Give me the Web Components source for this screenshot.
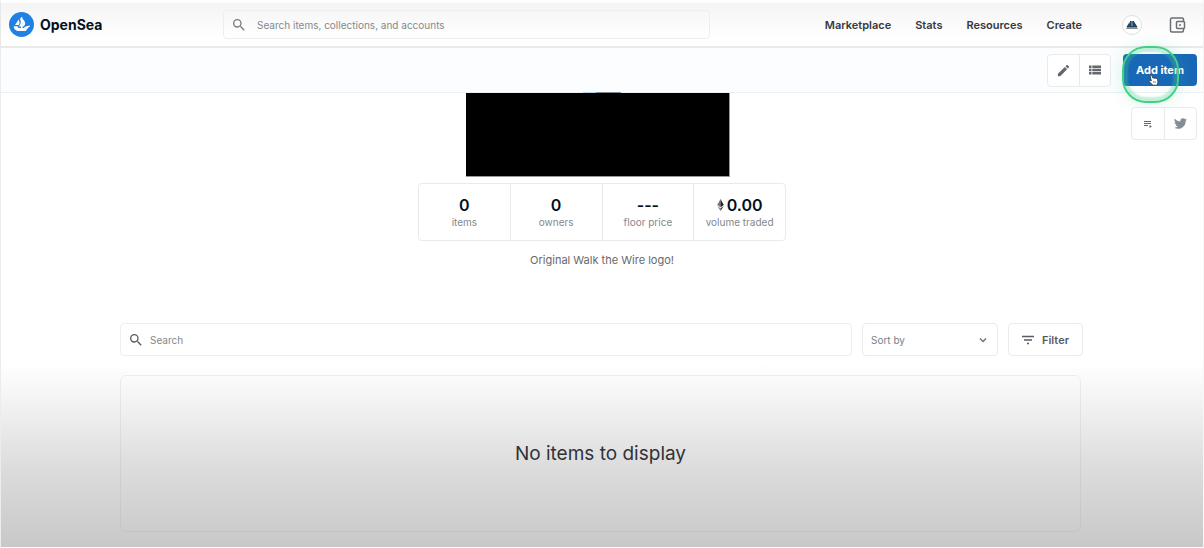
<!DOCTYPE html>
<html lang="en">
<head>
<meta charset="utf-8">
<title>OpenSea</title>
<style>
html { background: #fff; }
body { margin: 0; color: #353840; font: 11px/16px Inter, "Liberation Sans", sans-serif; }
</style>
</head>
<body>
<collection-page></collection-page>
<script>
function define(name, css, html) {
  customElements.define(name, class extends HTMLElement {
    constructor() {
      super();
      this.attachShadow({ mode: "open" }).innerHTML =
        "<style>*{box-sizing:border-box}svg{display:block}" + css + "</style>" + html;
    }
  });
}

const magnifier = '<svg width="16" height="16" viewBox="0 0 24 24" fill="currentColor" aria-hidden="true"><path d="M15.5 14h-.79l-.28-.27A6.47 6.47 0 0 0 16 9.5 6.5 6.5 0 1 0 9.5 16c1.61 0 3.09-.59 4.23-1.57l.27.28v.79l5 4.99L20.49 19zm-6 0a4.5 4.5 0 1 1 0-9 4.5 4.5 0 0 1 0 9"/></svg>';

customElements.define("search-box", class extends HTMLElement {
  constructor() {
    super();
    const label = this.getAttribute("label");
    this.attachShadow({ mode: "open" }).innerHTML = `
      <style>
        :host { display: block; }
        label { box-sizing: border-box; display: flex; align-items: center; gap: var(--box-gap, 6px); height: 100%; padding: 0 8px 0 7px; border: 1px solid #eceeef; border-radius: 4px; color: var(--box-icon, #55595d); }
        svg { display: block; flex: none; }
        input { flex: 1; min-width: 0; padding: 0; border: 0; outline: 0; background: none; font: 10px/16px Inter, "Liberation Sans", sans-serif; color: #353840; }
        input::placeholder { color: #84888c; opacity: 1; }
      </style>
      <label>${magnifier}<input type="text" aria-label="${label}" placeholder="${label}"></label>`;
  }
});

define("brand-logo", `
  :host { display: block; }
  a { display: flex; align-items: center; gap: 6px; color: #04111d; text-decoration: none; font-size: 14px; line-height: 20px; font-weight: 700; }
`, `
  <a href="#"><svg width="25" height="25" viewBox="0 0 90 90" aria-hidden="true"><circle cx="45" cy="45" r="45" fill="#2081e2"/><path fill="#fff" d="m22.2 46.5.2-.3 11.7-18.3c.2-.3.6-.2.8.1 2 4.400 3.600 9.800 2.900 13.200-.3 1.400-1.200 3.300-2.200 5l-.4.7c-.1.1-.2.2-.4.2H22.600c-.4 0-.6-.3-.4-.6"/><path fill="#fff" d="M74.400 49.800v2.600c0 .2 0 .3-.2.4-1 .4-4.200 1.900-5.500 3.800-3.400 4.700-6 11.500-11.800 11.500H32.600C24 68.100 17 61.100 17 52.400v-.3c0-.3.2-.4.4-.4h13.600c.3 0 .5.3.5.5-.1.9.1 1.800.5 2.600.8 1.600 2.500 2.600 4.200 2.600h6.700v-5.200h-6.600c-.4 0-.6-.4-.4-.7l.8-1.100c.6-.9 1.500-2.300 2.400-3.900.6-1 1.200-2.200 1.700-3.300l.6-1.500c.4-1.300.8-2.700.8-4.900 0-2.500-.5-5.500-1.100-7.800-.6-2.300-1.500-4.400-2.600-6.400-.2-.3 0-.6.3-.5l4.200 1.100v-2.300a2.800 2.800 0 0 1 5.600 0v3.900c2.800 1.900 9.500 8.200 9.500 16.500 0 4.100-2.200 6.800-4.200 9.200l-1.500 1.500c-.4.400-1 .500-1.400.500h-2.400v5.200h3c.9 0 1.700-.3 2.400-.8.700-.5 2.300-2.300 3.500-3.800l16.300-4.800c.300-.1.600.1.600.4z"/></svg>OpenSea</a>
`);

define("site-header", `
  :host { display: block; margin-top: 3px; border-bottom: 2px solid #e7e9ea; background: linear-gradient(#f4f4f4, #fff 80%); box-shadow: 0 1px 3px #0000000d; }
  header { display: flex; align-items: center; height: 43px; padding: 0 17px 0 8px; }
  brand-logo { flex: 0 0 214px; }
  search-box { flex: 1; height: 29px; min-width: 100px; --box-gap: 10px; --box-icon: #777b7f; }
  nav { display: flex; align-items: center; gap: 24px; margin-left: 115px; }
  a { color: #353840; text-decoration: none; font-weight: 600; }
  .avatar { margin-left: 16px; }
  .wallet { margin-left: 2px; }
`, `
  <header>
    <brand-logo></brand-logo>
    <search-box label="Search items, collections, and accounts"></search-box>
    <nav aria-label="Main">
      <a href="#">Marketplace</a><a href="#">Stats</a><a href="#">Resources</a><a href="#">Create</a>
      <a class="avatar" href="#" aria-label="Account"><svg width="20" height="20" viewBox="0 0 20 20"><circle cx="10" cy="10" r="9.500" fill="#fff" stroke="#dcdfe1"/><path d="M4.500 12 7.500 7l1 5zM8 12V6h4v6zM12 6.500l3.500 5.500h-3.500z" fill="#24465c"/><path d="M9 6h1.500l.5 5H9z" fill="#4f83a8"/><path d="M4 14h12l-1-2H5z" fill="#898f95"/></svg></a>
      <a class="wallet" href="#" aria-label="Wallet"><svg width="18" height="18" viewBox="0 0 18 18" fill="none" stroke="#6a6f76" stroke-width="1.500"><path d="M15.500 5V3.500q0-1.500-1.500-1.500H4Q2.500 2 2.500 3.500v11Q2.500 16 4 16h10q1.500 0 1.500-1.500V13"/><rect x="8.500" y="5.500" width="8" height="7" rx="1"/><circle cx="12" cy="9" r="1" fill="#6a6f76" stroke="none"/></svg></a>
    </nav>
  </header>
`);

define("icon-pair", `
  :host { box-sizing: border-box; display: flex; width: 64px; height: 33px; border: 1px solid #e8eaeb; border-radius: 4px; background: #fff; }
  ::slotted(button) { display: flex; flex: 1; align-items: center; justify-content: center; margin: 0; padding: 0; border: 0; background: none; color: #63686f; }
  ::slotted(button:last-child) { border-left: 1px solid #e8eaeb; }
`, `<slot></slot>`);

define("owner-toolbar", `
  :host { display: block; border-bottom: 1px solid #edf0f1; background: #fbfdff; }
  .bar { display: flex; justify-content: flex-end; align-items: center; gap: 12px; height: 44px; padding: 0 6px; }
  .add { position: relative; }
  .add > button { display: block; width: 74px; height: 32px; padding: 0; border: 0; border-radius: 4px; background: #1868b7; color: #fff; font: 700 11px/16px Inter, "Liberation Sans", sans-serif; }
  .ring { position: absolute; left: -1px; top: -8px; width: 57px; height: 57px; border: 2px solid #42cf88; border-radius: 24px; box-shadow: 0 0 16px #42cf8838, inset 0 0 2px 4px #42cf8850; pointer-events: none; }
  .hand { position: absolute; left: 25px; top: 20px; pointer-events: none; }
`, `
  <div class="bar">
    <icon-pair>
      <button aria-label="Edit"><svg width="15" height="15" viewBox="0 0 24 24" fill="currentColor"><path d="M3 17.250V21h3.750L17.800 9.900l-3.700-3.700zM20.700 7c.4-.4.4-1 0-1.400l-2.300-2.300c-.4-.4-1-.4-1.400 0l-1.800 1.800L18.900 8.900z"/></svg></button>
      <button aria-label="List view"><svg width="16" height="16" viewBox="0 0 16 16" fill="currentColor"><path d="M2 3.500h2.500v2.500H2zm3.300 0H14v2.500H5.300zM2 6.800h2.500v2.500H2zm3.300 0H14v2.500H5.300zM2 10h2.500v2.500H2zm3.300 0H14v2.500H5.300z"/></svg></button>
    </icon-pair>
    <div class="add">
      <button>Add item</button>
      <div class="ring"></div>
      <svg class="hand" width="11" height="12" viewBox="0 0 11 12"><path d="M2 1q1-.8 1.700.4L5 4.200q.8-.7 1.400.1.900-.6 1.400.2 1.200-.5 1.600.6l.6 2.900-.8 3.200H5L1.300 7.700Q.6 6.500 1.700 6.200L3.300 7z" fill="#fff" stroke="#26343e" stroke-width=".8"/><path d="m5.500 7 .4 2m1.100-2 .3 2" stroke="#26343e" stroke-width=".5"/></svg>
    </div>
  </div>
`);

define("stat-cell", `
  :host { flex: 1; display: flex; flex-direction: column; align-items: center; padding: 12px 0 9px; }
  :host(:not(:first-child)) { border-left: 1px solid #e8ebec; }
  .value { display: flex; align-items: center; gap: 3px; font-size: 16px; line-height: 18px; font-weight: 600; color: #04111d; }
  .label { font-size: 10px; line-height: 16px; color: #83888d; }
`, `<div class="value"><slot name="value"></slot></div><div class="label"><slot></slot></div>`);

define("collection-summary", `
  :host { display: flex; flex-direction: column; align-items: center; position: relative; }
  .links { position: absolute; right: 6px; top: 14px; }
  .links icon-pair { width: 66px; }
  .cover { position: relative; width: 264px; height: 84px; margin-right: 9px; border: solid #999; border-width: 0 1px 1px 0; background: #000; }
  .peek { position: absolute; left: 117px; top: -1px; width: 38px; height: 1px; background: linear-gradient(90deg, #a9d5f7 35%, #7d8994 35%); }
  .stats { display: flex; width: 368px; height: 58px; margin-top: 6px; border: 1px solid #e8ebec; border-radius: 4px; }
  p { margin: 11px 0 0; line-height: 16px; color: #66696d; }
`, `
  <div class="cover"><div class="peek"></div></div>
  <div class="stats">
    <stat-cell><span slot="value">0</span>items</stat-cell>
    <stat-cell><span slot="value">0</span>owners</stat-cell>
    <stat-cell><span slot="value">---</span>floor price</stat-cell>
    <stat-cell><svg slot="value" width="7" height="12" viewBox="0 0 6 11" aria-hidden="true"><path d="M3 0 0 5.500l3 2z" fill="#777"/><path d="m3 0 3 5.500-3 2z" fill="#222"/><path d="m0 6.500 3 2v2.500z" fill="#888"/><path d="m6 6.500-3 2v2.500z" fill="#333"/></svg><span slot="value">0.00</span>volume traded</stat-cell>
  </div>
  <p>Original Walk the Wire logo!</p>
  <div class="links"><icon-pair>
    <button aria-label="Activity"><svg width="10" height="10" viewBox="0 0 10 10" fill="none" stroke="currentColor"><path d="M1 2.500h7M1 4.500h7M1 6.500h4"/><path d="m6.500 6 2.500 1.500L6.500 9z" fill="currentColor" stroke="none"/></svg></button>
    <button aria-label="Twitter"><svg width="13" height="13" viewBox="0 0 24 24" fill="#858e96"><path d="M23.950 4.570a10 10 0 0 1-2.820.77 4.960 4.960 0 0 0 2.160-2.720c-.95.55-2 .95-3.130 1.180a4.920 4.920 0 0 0-8.380 4.480C7.690 8.090 4.070 6.130 1.640 3.160a4.920 4.920 0 0 0 1.520 6.570 4.900 4.900 0 0 1-2.230-.61v.06a4.920 4.920 0 0 0 3.950 4.830 5 5 0 0 1-2.210.08 4.940 4.940 0 0 0 4.600 3.420A9.870 9.870 0 0 1 0 19.540a13.990 13.990 0 0 0 7.550 2.210c9.050 0 14-7.500 14-13.980l-.02-.63a9.940 9.940 0 0 0 2.420-2.570"/></svg></button>
  </icon-pair></div>
`);

define("filter-row", `
  :host { display: flex; gap: 10px; height: 33px; margin: 55px 120px 0 119px; }
  search-box { flex: 1; }
  .sort { flex: 0 0 136px; display: grid; align-items: center; }
  .sort > * { grid-area: 1 / 1; }
  .sort svg { justify-self: end; margin-right: 10px; pointer-events: none; }
  select, button { height: 33px; border: 1px solid #e9ebec; border-radius: 4px; background: #fff; }
  select { appearance: none; width: 100%; padding: 0 8px; color: #7b8085; font: 10px/16px Inter, "Liberation Sans", sans-serif; }
  button { flex: 0 0 75px; display: flex; align-items: center; justify-content: center; gap: 8px; padding: 0; color: #575c62; font: 600 11px/16px Inter, "Liberation Sans", sans-serif; }
`, `
  <search-box label="Search"></search-box>
  <label class="sort"><select aria-label="Sort by"><option>Sort by</option></select><svg width="10" height="10" viewBox="0 0 10 10" fill="none" stroke="#6d7378" stroke-width="1.400"><path d="m2 3.500 3 3 3-3"/></svg></label>
  <button><svg width="12" height="10" viewBox="0 0 12 10" fill="none" stroke="currentColor" stroke-width="1.400"><path d="M0 1.500h12M2 5h8M5 8.500h2"/></svg>Filter</button>
`);

define("empty-results", `
  :host { display: block; padding: 11px 122px 15px 119px; margin-top: 8px; background: linear-gradient(#fff, #f2f2f2 22%, #dcdcdc 57%, #c8c8c8); }
  .panel { display: flex; align-items: center; justify-content: center; height: 157px; border: 1px solid #7882881f; border-radius: 6px; color: #303239; font-size: 19px; line-height: 24px; }
`, `<div class="panel"><slot></slot></div>`);

define("collection-page", `
  :host { display: flow-root; border-left: 1px solid #00000012; border-right: 1px solid #00000008; }
`, `
  <site-header></site-header>
  <main>
    <owner-toolbar></owner-toolbar>
    <collection-summary></collection-summary>
    <filter-row></filter-row>
    <empty-results>No items to display</empty-results>
  </main>
`);
</script>
</body>
</html>
